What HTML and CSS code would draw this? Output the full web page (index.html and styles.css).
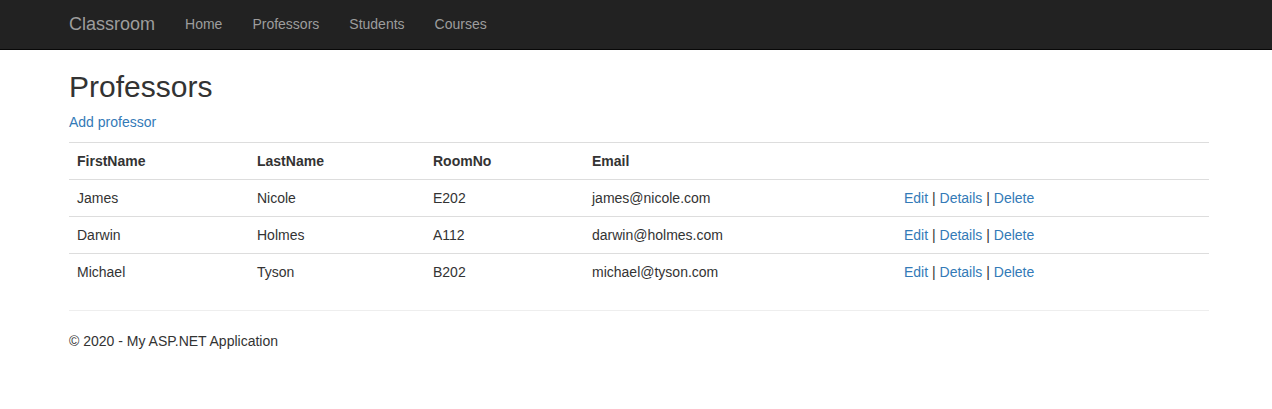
FILE: index.html
```html
<!DOCTYPE html>
<html>
<head>
<meta charset="utf-8">
<title>Professors</title>
<link rel="stylesheet" href="styles.css">
</head>
<body>
<nav class="navbar">
  <div class="container nav-inner">
    <a class="brand" href="#">Classroom</a>
    <ul class="nav">
      <li><a href="#">Home</a></li>
      <li><a href="#">Professors</a></li>
      <li><a href="#">Students</a></li>
      <li><a href="#">Courses</a></li>
    </ul>
  </div>
</nav>
<main class="container body-content">
  <h2 class="title">Professors</h2>
  <p class="para"><a href="#">Add professor</a></p>
  <table class="table">
    <tr>
      <th class="c1">FirstName</th>
      <th class="c2">LastName</th>
      <th class="c3">RoomNo</th>
      <th class="c4">Email</th>
      <th class="c5"></th>
    </tr>
    <tr>
      <td>James</td><td>Nicole</td><td>E202</td><td>james@nicole.com</td>
      <td><a href="#">Edit</a> | <a href="#">Details</a> | <a href="#">Delete</a></td>
    </tr>
    <tr>
      <td>Darwin</td><td>Holmes</td><td>A112</td><td>darwin@holmes.com</td>
      <td><a href="#">Edit</a> | <a href="#">Details</a> | <a href="#">Delete</a></td>
    </tr>
    <tr>
      <td>Michael</td><td>Tyson</td><td>B202</td><td>michael@tyson.com</td>
      <td><a href="#">Edit</a> | <a href="#">Details</a> | <a href="#">Delete</a></td>
    </tr>
  </table>
  <hr class="rule">
  <footer>
    <p class="para">&copy; 2020 - My ASP.NET Application</p>
  </footer>
</main>
</body>
</html>
```

FILE: styles.css
```css
* { box-sizing: border-box; }
html, body { margin: 0; padding: 0; }
body {
  font-family: "Liberation Sans", Arial, Helvetica, sans-serif;
  font-size: 14px;
  line-height: 20px;
  color: #333;
  background: #fff;
}
a { color: #337ab7; text-decoration: none; }
.container {
  width: 1140px;
  margin-left: 69px;
}
.navbar {
  background: #222;
  border-bottom: 1px solid #080808;
  height: 50px;
}
.nav-inner {
  display: flex;
  align-items: flex-start;
}
.brand {
  color: #9d9d9d;
  font-size: 18px;
  line-height: 20px;
  padding: 14px 15px 16px;
  margin-left: -15px;
  height: 50px;
}
.nav {
  display: flex;
  list-style: none;
  margin: 0;
  padding: 0;
}
.nav a {
  display: block;
  color: #9d9d9d;
  padding: 14px 15px 16px;
  line-height: 20px;
}
.title {
  font-size: 30px;
  font-weight: 500;
  line-height: 33px;
  margin: 20px 0 9px;
}
.para { margin: 0 0 10px; }
.table {
  width: 1140px;
  border-collapse: collapse;
  border-spacing: 0;
  margin-bottom: 20px;
}
.table th, .table td {
  padding: 8px;
  line-height: 20px;
  border-top: 1px solid #ddd;
  text-align: left;
  vertical-align: top;
}
.table th { font-weight: bold; }
.c1 { width: 180px; }
.c2 { width: 176px; }
.c3 { width: 159px; }
.c4 { width: 312px; }
.c5 { width: 313px; }
.rule {
  margin: 20px 0;
  border: 0;
  border-top: 1px solid #eee;
  height: 0;
}
```
